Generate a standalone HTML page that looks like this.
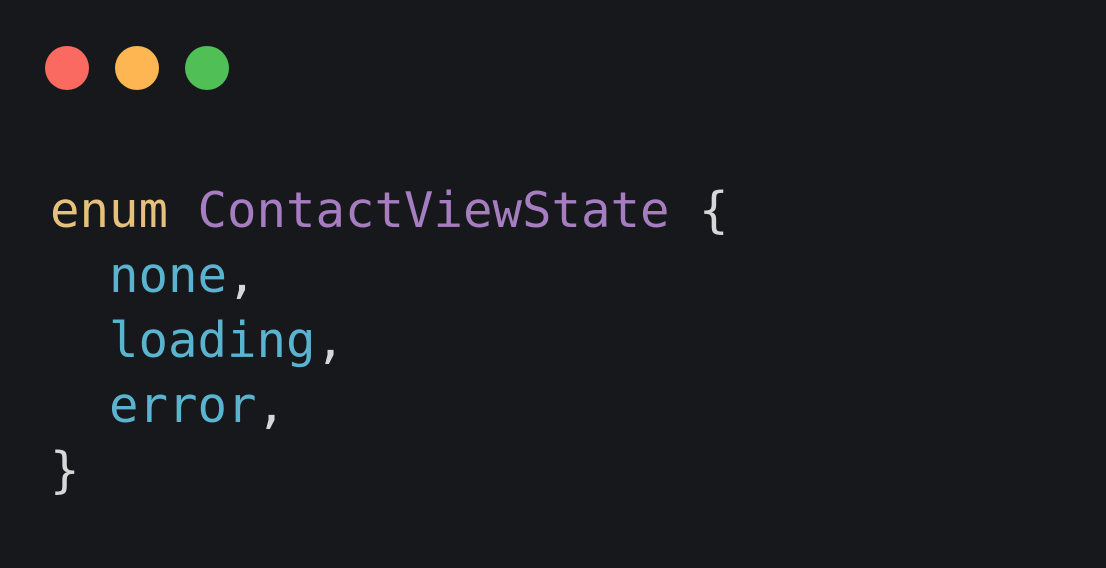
<!DOCTYPE html>
<html><head><style>
html,body{margin:0;padding:0;width:1106px;height:568px;background:#16181b;overflow:hidden}
.d{position:absolute;top:46px;width:44px;height:44px;border-radius:50%}
pre{position:absolute;left:50px;top:178px;margin:0;font-family:"DejaVu Sans Mono","Liberation Mono",monospace;font-size:49px;line-height:65px;color:#d7d7d7}
.k{color:#e6c17c}.t{color:#a57dc0}.v{color:#5bb4cf}
</style></head><body>
<div class="d" style="left:45px;background:#fb6a61"></div>
<div class="d" style="left:115px;background:#fdb652"></div>
<div class="d" style="left:185px;background:#50bf55"></div>
<pre><span class="k">enum</span> <span class="t">ContactViewState</span> {
  <span class="v">none</span>,
  <span class="v">loading</span>,
  <span class="v">error</span>,
}</pre>
</body></html>
